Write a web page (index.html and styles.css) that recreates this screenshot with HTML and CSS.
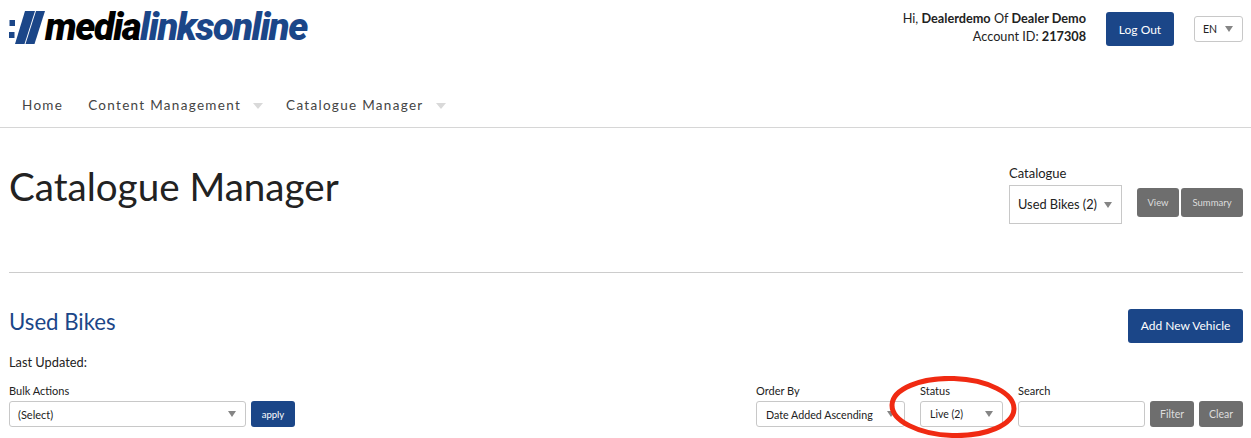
FILE: index.html
```html
<!DOCTYPE html>
<html>
<head>
  <meta charset="utf-8">
  <meta name="viewport" content="width=device-width">
  <title>Catalogue Manager</title>
  <link rel="stylesheet" href="styles.css">
</head>
<body>
  <header class="top">
    <a class="logo">
      <svg class="logo-mark" width="37" height="35" viewBox="0 0 37 35">
        <rect x="0.5" y="10" width="5.5" height="6" fill="#1b4688"/>
        <rect x="0" y="22" width="5.5" height="6" fill="#1b4688"/>
        <polygon points="16,1 26,1 15.5,34 6,34" fill="#1b4688"/>
        <polygon points="27,1 36,1 25.5,34 16.5,34" fill="#1b4688"/>
      </svg>
      <span class="logo-txt">media<span class="logo-blue">linksonline</span></span>
    </a>
    <div class="account">
      <div class="account-txt">
        <p>Hi, <b>Dealerdemo</b> Of <b>Dealer Demo</b></p>
        <p>Account ID: <b>217308</b></p>
      </div>
      <button class="btn btn--blue btn--logout">Log Out</button>
      <div class="select select--lang">EN<i class="arrow"></i></div>
    </div>
  </header>

  <nav class="nav">
    <a class="nav-item">Home</a>
    <a class="nav-item nav-item--sub">Content Management<i class="arrow arrow--light"></i></a>
    <a class="nav-item nav-item--sub">Catalogue Manager<i class="arrow arrow--light"></i></a>
  </nav>

  <main class="content">
    <section class="title-row">
      <h1>Catalogue Manager</h1>
      <div class="catalogue">
        <div>
          <label class="catalogue-label">Catalogue</label>
          <div class="select select--catalogue">Used Bikes (2)<i class="arrow"></i></div>
        </div>
        <button class="btn btn--grey btn--view">View</button>
        <button class="btn btn--grey btn--summary">Summary</button>
      </div>
    </section>

    <section class="list-head">
      <div>
        <h2>Used Bikes</h2>
        <p class="updated">Last Updated:</p>
      </div>
      <button class="btn btn--blue btn--add">Add New Vehicle</button>
    </section>

    <section class="filters">
      <div class="bulk">
        <div class="field">
          <label>Bulk Actions</label>
          <div class="select select--bulk">(Select)<i class="arrow"></i></div>
        </div>
        <button class="btn btn--blue btn--apply">apply</button>
      </div>
      <div class="filter-right">
        <div class="field">
          <label>Order By</label>
          <div class="select select--order">Date Added Ascending<i class="arrow"></i></div>
        </div>
        <div class="field field--status">
          <label>Status</label>
          <div class="select select--status">Live (2)<i class="arrow"></i></div>
          <svg class="circled" width="130" height="64" viewBox="0 0 130 64">
            <ellipse cx="65" cy="31" rx="61" ry="28.5" transform="rotate(2 65 31)" fill="none" stroke="#f02a12" stroke-width="5"/>
          </svg>
        </div>
        <div class="field">
          <label>Search</label>
          <div class="input"></div>
        </div>
        <button class="btn btn--grey btn--filter">Filter</button>
        <button class="btn btn--grey btn--clear">Clear</button>
      </div>
    </section>
  </main>
</body>
</html>
```

FILE: styles.css
```css
* {box-sizing: border-box;}

body {
  margin: 0;
  height: 438px;
  overflow: hidden;
  background: #fff;
  color: #222;
  font-family: Lato, "Liberation Sans", sans-serif;
}

p, h1, h2 {margin: 0; font-weight: 400;}

/* header */
.top {
  display: flex;
  justify-content: space-between;
  height: 85px;
  padding: 10px 8px 0 9px;
}

.logo {display: flex; align-items: flex-start; height: 36px;}
.logo-mark {display: block; flex: none;}
.logo-txt {
  margin: -2px 0 0 -1px;
  font-family: Roboto, sans-serif;
  font-size: 38px;
  line-height: 38px;
  font-weight: 900;
  font-style: italic;
  letter-spacing: -1.45px;
  color: #000;
}
.logo-blue {color: #1b4688;}

.account {display: flex; align-items: flex-start; padding-top: 2px;}
.account-txt {
  margin-top: -3px;
  font-size: 12.7px;
  line-height: 18px;
  text-align: right;
}
.account-txt b {font-weight: 700;}

.btn {
  border: 0;
  border-radius: 3px;
  color: #fff;
  font-family: inherit;
  padding: 0;
}
.btn--blue {background: #1b4688;}
.btn--grey {background: #6e6e6e; color: #ddd;}

.btn--logout {width: 68px; height: 34px; margin-left: 20px; font-size: 12px;}

.select {
  position: relative;
  display: flex;
  align-items: center;
  background: #fff;
  border: 1px solid #c8c8c8;
  border-radius: 3px;
  font-size: 11px;
}
.select--lang {width: 49px; height: 26px; margin: 4px 0 0 20px; padding-left: 8px; font-size: 10.5px;}

.arrow {
  position: absolute;
  top: 50%;
  right: 9px;
  margin-top: -3px;
  border-left: 4px solid transparent;
  border-right: 4px solid transparent;
  border-top: 6px solid #858585;
}

/* nav */
.nav {
  display: flex;
  height: 43px;
  padding: 11px 0 0 22px;
  border-bottom: 1px solid #d6d6d6;
  font-size: 13.5px;
  line-height: 18px;
  letter-spacing: 1.3px;
  color: #444;
}
.nav-item {margin-right: 25px;}
.nav-item--sub {position: relative; margin-right: 45px;}
.arrow--light {
  top: 7px;
  right: -22px;
  margin: 0;
  border-left-width: 5px;
  border-right-width: 5px;
  border-top-color: #d9d9d9;
}

/* main */
.content {padding: 0 8px 0 9px;}

.title-row {
  display: flex;
  justify-content: space-between;
  height: 145px;
  padding-top: 35px;
  border-bottom: 1px solid #ccc;
}
h1 {font-size: 38.6px; line-height: 46px; color: #222;}

.catalogue {display: flex; align-items: flex-start;}
.catalogue-label {display: block; font-size: 13px; line-height: 20px; margin-bottom: 2px;}
.select--catalogue {
  width: 113px;
  height: 39px;
  padding: 0 0 2px 8px;
  border-radius: 0;
  font-size: 12.8px;
}
.btn--view {width: 42px; height: 29px; margin: 25px 0 0 15px; font-size: 9.5px;}
.btn--summary {width: 62px; height: 29px; margin: 25px 0 0 2px; font-size: 9.5px;}

.list-head {
  display: flex;
  justify-content: space-between;
  align-items: flex-start;
  height: 109px;
  padding-top: 36px;
}
h2 {font-size: 22.2px; line-height: 26px; color: #1b4688;}
.updated {margin-top: 19px; font-size: 12.8px; line-height: 16px;}
.btn--add {width: 115px; height: 34px; padding-bottom: 2px; font-size: 12px;}

.filters {
  display: flex;
  justify-content: space-between;
  align-items: flex-end;
  margin-top: 2px;
}
.bulk, .filter-right {display: flex; align-items: flex-end;}

.field {position: relative;}
.field label {display: block; font-size: 11px; line-height: 14px; margin-bottom: 3px;}
.select--bulk {width: 237px; height: 26px; padding-left: 8px;}
.select--order {width: 149px; height: 26px; padding-left: 9px; font-size: 10.7px;}
.select--status {width: 83px; height: 26px; padding-left: 9px; font-size: 10.5px;}
.field--status {margin-left: 15px;}
.field--status + .field {margin-left: 15px;}
.input {
  width: 127px;
  height: 26px;
  border: 1px solid #c8c8c8;
  border-radius: 3px;
}

.btn--apply {width: 44px; height: 26px; margin-left: 5px; font-size: 9.5px;}
.btn--filter {width: 44px; height: 26px; margin-left: 5px; font-size: 10.5px;}
.btn--clear {width: 44px; height: 26px; margin-left: 5px; font-size: 10.5px;}

.circled {
  position: absolute;
  left: -32px;
  top: -8px;
  pointer-events: none;
}
```
